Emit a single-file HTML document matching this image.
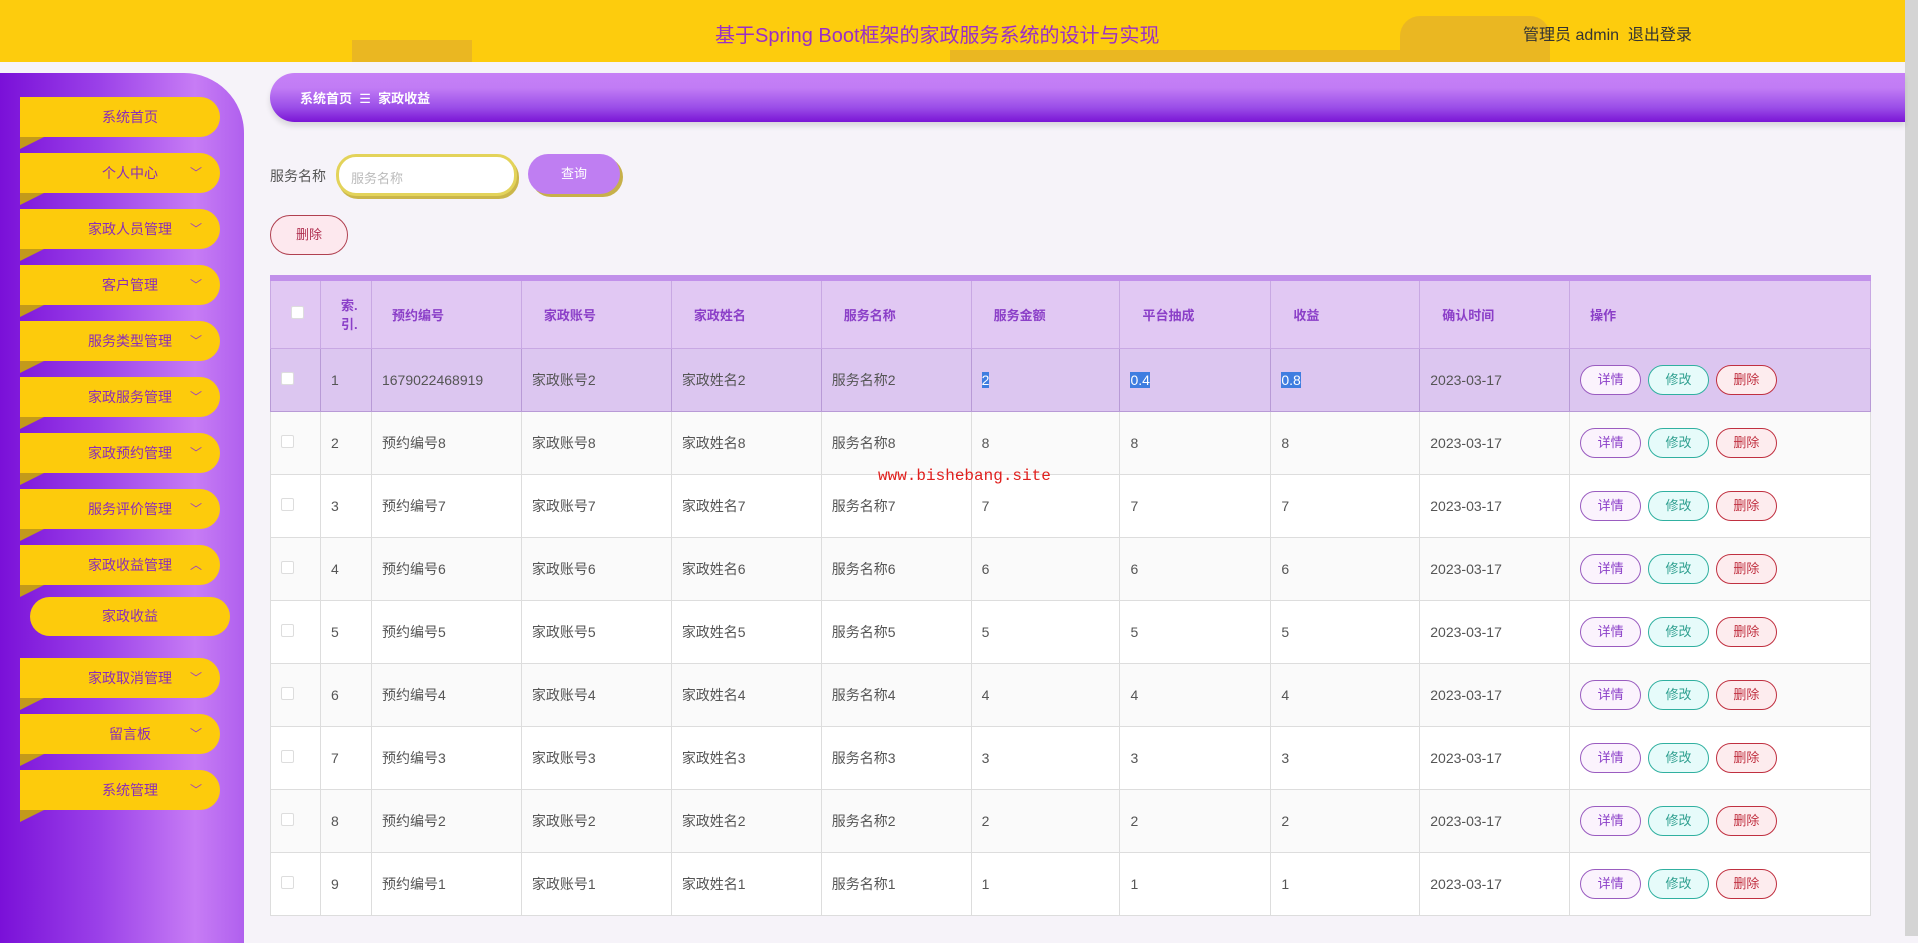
<!DOCTYPE html>
<html><head><meta charset="utf-8"><style>
*{box-sizing:border-box;margin:0;padding:0}
body{width:1918px;height:936px;overflow:hidden;background:#f6f3f9;font-family:"Liberation Sans","Noto Sans CJK SC",sans-serif;position:relative;font-size:14px;color:#444}
.hd{position:absolute;left:0;top:0;width:1905px;height:62px;background:#fdcc0d}
.bld{position:absolute;background:#eab722}
.title{position:absolute;left:715px;top:19px;font-size:20px;color:#9a2fc6}
.user{position:absolute;left:1523px;top:21px;font-size:16px;color:#333}
.sb{position:absolute;right:0;top:0;width:13px;height:936px;background:#d4d4d4}
.side{position:absolute;left:0;top:73px;width:244px;height:870px;border-top-right-radius:60px;background:linear-gradient(90deg,#7a10d8 0%,#9a40e8 40%,#c77cf5 80%,#b060ee 100%)}
.mi{position:absolute;left:20px;width:200px;height:40px;background:#fdcb0c;border-radius:0 20px 20px 0;color:#8b2db8;font-size:14px;text-align:center;line-height:40px}
.mi:after{content:"";position:absolute;left:0;bottom:-12px;border-top:12px solid #c39a1b;border-left:24px solid transparent;transform:scaleX(-1);transform-origin:12px}
.mi span{position:absolute;left:10px;width:200px;text-align:center}
.mi i{position:absolute;right:18px;top:0;font-style:normal;font-size:12px;color:#9a40c0}
.sub{position:absolute;left:30px;top:597px;width:200px;height:39px;background:#fdcb0c;border-radius:20px;color:#8b2db8;text-align:center;line-height:39px}
.bc{position:absolute;left:270px;top:73px;width:1635px;height:49px;border-radius:25px 0 0 25px;background:linear-gradient(180deg,#c680f6 0%,#c17cf5 30%,#9b4ee8 70%,#7a15d5 100%);box-shadow:0 4px 6px rgba(0,0,0,.12);color:#fff;font-size:13px;font-weight:bold;padding:15px 0 0 30px}
.lbl{position:absolute;left:270px;top:166px;font-size:14px;color:#555}
.inp{position:absolute;left:336px;top:154px;width:181px;height:42px;border:3px solid #e3d35a;border-radius:20px;background:#fff;color:#bbb;padding:11px 12px;font-size:13px;box-shadow:2px 3px 0 #cbb64a}
.qb{position:absolute;left:528px;top:154px;width:92px;height:40px;border-radius:20px;background:#bf7ef2;color:#fff;text-align:center;line-height:40px;font-size:13px;box-shadow:3px 3px 0 #c7b04a}
.db{position:absolute;left:270px;top:215px;width:78px;height:40px;border-radius:20px;border:1px solid #b04050;background:#fde8ee;color:#b03050;text-align:center;line-height:38px;font-size:13px}
table{position:absolute;left:270px;top:275px;width:1601px;border-collapse:collapse;border-top:6px solid #c190ea;background:#fff}
td{border:1px solid #ddd;padding-left:10px;height:63px;font-size:14px;color:#555}
tr.h td{height:70px;background:#e1c8f3;color:#8b3fc8;font-weight:bold;font-size:13px;border-color:#c8a8e3;padding-left:20px}
tr.s td{background:#dcc6f0;border-color:#b89ad6}
tr:nth-child(odd):not(.h):not(.s) td{background:#fafafa}
.cb{display:inline-block;width:13px;height:13px;border:1px solid #ddd;background:#fff;border-radius:2px}
.hl{background:#3f7de0;color:#fff}
.b{display:inline-block;width:61px;height:30px;border-radius:15px;text-align:center;line-height:28px;font-size:13px;margin-right:3px}
.b1{border:1px solid #9a5cc0;background:#fbf3fd;color:#8b3fc8}
.b2{border:1px solid #30b0a0;background:#e6fbfa;color:#30a090}
.b3{border:1px solid #c03040;background:#fdecee;color:#c03040}
.wm{position:absolute;left:878px;top:467px;font-family:"Liberation Mono",monospace;font-size:16px;color:#e0201e}
</style></head><body>
<div class="hd">
<div class="bld" style="left:352px;top:40px;width:120px;height:22px"></div>
<div class="bld" style="left:950px;top:50px;width:520px;height:12px"></div>
<div class="bld" style="left:1400px;top:16px;width:150px;height:46px;border-radius:20px 20px 0 0"></div>
</div>
<div class="title">基于Spring Boot框架的家政服务系统的设计与实现</div>
<div class="user">管理员 admin &nbsp;退出登录</div>
<div class="sb"></div>
<div class="side"></div>
<div class="mi" style="top:97px"><span>系统首页</span></div>
<div class="mi" style="top:153px"><span>个人中心</span><i>﹀</i></div>
<div class="mi" style="top:209px"><span>家政人员管理</span><i>﹀</i></div>
<div class="mi" style="top:265px"><span>客户管理</span><i>﹀</i></div>
<div class="mi" style="top:321px"><span>服务类型管理</span><i>﹀</i></div>
<div class="mi" style="top:377px"><span>家政服务管理</span><i>﹀</i></div>
<div class="mi" style="top:433px"><span>家政预约管理</span><i>﹀</i></div>
<div class="mi" style="top:489px"><span>服务评价管理</span><i>﹀</i></div>
<div class="mi" style="top:545px"><span>家政收益管理</span><i>︿</i></div>
<div class="sub">家政收益</div>
<div class="mi" style="top:658px"><span>家政取消管理</span><i>﹀</i></div>
<div class="mi" style="top:714px"><span>留言板</span><i>﹀</i></div>
<div class="mi" style="top:770px"><span>系统管理</span><i>﹀</i></div>
<div class="bc">系统首页 &nbsp;<span style="font-weight:normal">☰</span>&nbsp; 家政收益</div>
<div class="lbl">服务名称</div>
<div class="inp">服务名称</div>
<div class="qb">查询</div>
<div class="db">删除</div>
<table>
<colgroup><col style="width:50px"><col style="width:51px"><col style="width:150px"><col style="width:150px"><col style="width:150px"><col style="width:150px"><col style="width:149px"><col style="width:151px"><col style="width:149px"><col style="width:150px"><col style="width:301px"></colgroup>
<tr class="h"><td><span class="cb"></span></td><td style="padding-left:20px">索.<br>引.</td><td>预约编号</td><td style="padding-left:22px">家政账号</td><td style="padding-left:22px">家政姓名</td><td style="padding-left:22px">服务名称</td><td style="padding-left:22px">服务金额</td><td style="padding-left:22px">平台抽成</td><td style="padding-left:22px">收益</td><td style="padding-left:22px">确认时间</td><td>操作</td></tr>
<tr class="s"><td><span class="cb"></span></td><td>1</td><td>1679022468919</td><td>家政账号2</td><td>家政姓名2</td><td>服务名称2</td><td><span class="hl">2</span></td><td><span class="hl">0.4</span></td><td><span class="hl">0.8</span></td><td>2023-03-17</td><td><span class="b b1">详情</span> <span class="b b2">修改</span> <span class="b b3">删除</span></td></tr>
<tr><td><span class="cb"></span></td><td>2</td><td>预约编号8</td><td>家政账号8</td><td>家政姓名8</td><td>服务名称8</td><td>8</td><td>8</td><td>8</td><td>2023-03-17</td><td><span class="b b1">详情</span> <span class="b b2">修改</span> <span class="b b3">删除</span></td></tr>
<tr><td><span class="cb"></span></td><td>3</td><td>预约编号7</td><td>家政账号7</td><td>家政姓名7</td><td>服务名称7</td><td>7</td><td>7</td><td>7</td><td>2023-03-17</td><td><span class="b b1">详情</span> <span class="b b2">修改</span> <span class="b b3">删除</span></td></tr>
<tr><td><span class="cb"></span></td><td>4</td><td>预约编号6</td><td>家政账号6</td><td>家政姓名6</td><td>服务名称6</td><td>6</td><td>6</td><td>6</td><td>2023-03-17</td><td><span class="b b1">详情</span> <span class="b b2">修改</span> <span class="b b3">删除</span></td></tr>
<tr><td><span class="cb"></span></td><td>5</td><td>预约编号5</td><td>家政账号5</td><td>家政姓名5</td><td>服务名称5</td><td>5</td><td>5</td><td>5</td><td>2023-03-17</td><td><span class="b b1">详情</span> <span class="b b2">修改</span> <span class="b b3">删除</span></td></tr>
<tr><td><span class="cb"></span></td><td>6</td><td>预约编号4</td><td>家政账号4</td><td>家政姓名4</td><td>服务名称4</td><td>4</td><td>4</td><td>4</td><td>2023-03-17</td><td><span class="b b1">详情</span> <span class="b b2">修改</span> <span class="b b3">删除</span></td></tr>
<tr><td><span class="cb"></span></td><td>7</td><td>预约编号3</td><td>家政账号3</td><td>家政姓名3</td><td>服务名称3</td><td>3</td><td>3</td><td>3</td><td>2023-03-17</td><td><span class="b b1">详情</span> <span class="b b2">修改</span> <span class="b b3">删除</span></td></tr>
<tr><td><span class="cb"></span></td><td>8</td><td>预约编号2</td><td>家政账号2</td><td>家政姓名2</td><td>服务名称2</td><td>2</td><td>2</td><td>2</td><td>2023-03-17</td><td><span class="b b1">详情</span> <span class="b b2">修改</span> <span class="b b3">删除</span></td></tr>
<tr><td><span class="cb"></span></td><td>9</td><td>预约编号1</td><td>家政账号1</td><td>家政姓名1</td><td>服务名称1</td><td>1</td><td>1</td><td>1</td><td>2023-03-17</td><td><span class="b b1">详情</span> <span class="b b2">修改</span> <span class="b b3">删除</span></td></tr>
</table>
<div class="wm">www.bishebang.site</div>
</body></html>
